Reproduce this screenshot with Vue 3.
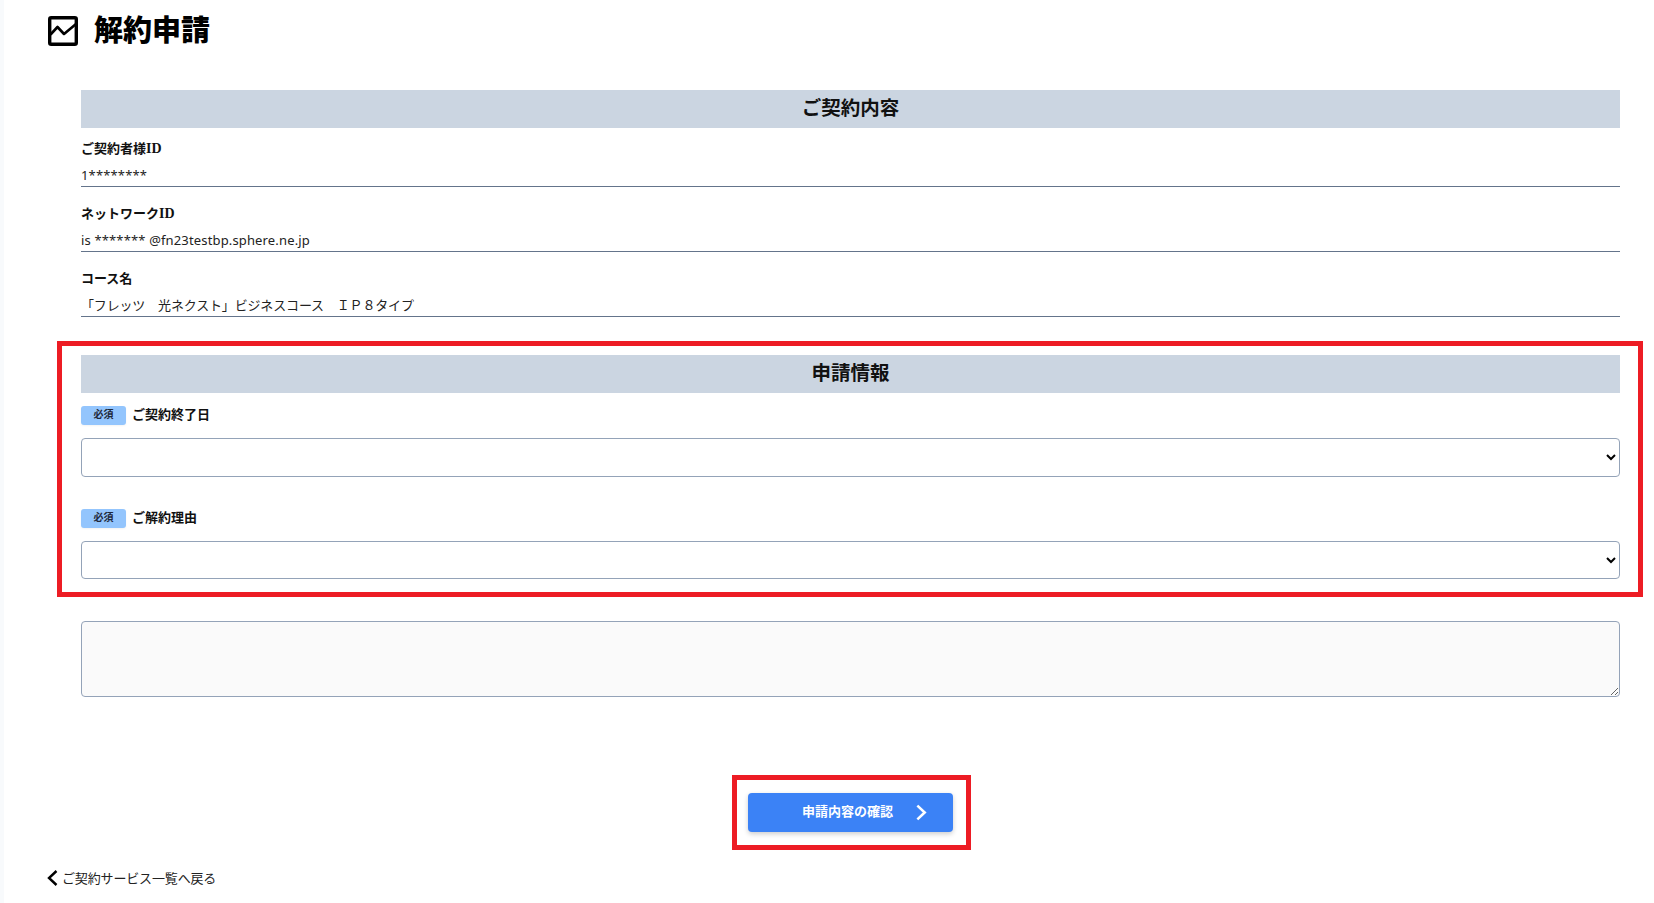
<script setup>
const contract = [
  { label: 'ご契約者様', latin: 'ID', value: '1********', cjk: false },
  { label: 'ネットワーク', latin: 'ID', value: 'is ******* @fn23testbp.sphere.ne.jp', cjk: false },
  { label: 'コース名', latin: '', value: '「フレッツ　光ネクスト」ビジネスコース　ＩＰ８タイプ', cjk: true }
]
</script>

<template>
  <div class="page">
    <div class="strip"></div>
    <main class="main">
      <header class="title-row">
        <svg class="title-icon" viewBox="0 0 30 30" fill="none" stroke="#000" stroke-width="3.4" stroke-linejoin="round" stroke-linecap="round">
          <rect x="1.7" y="1.7" width="26.6" height="26.6" rx="1.5" />
          <path stroke-width="2.6" d="M3 18 L9.5 11 L16 18 L28 8" />
        </svg>
        <h1 class="title">解約申請</h1>
      </header>

      <div class="content">
        <h2 class="section-head">ご契約内容</h2>
        <div v-for="item in contract" :key="item.label" class="field">
          <div class="field-label">{{ item.label }}<span class="latin">{{ item.latin }}</span></div>
          <div class="field-value" :class="{ 'field-value-cjk': item.cjk }">{{ item.value }}</div>
        </div>

        <section class="apply">
          <div class="annot annot-apply"></div>
          <h2 class="section-head">申請情報</h2>
          <div class="req-row">
            <span class="badge">必須</span><span class="req-label">ご契約終了日</span>
          </div>
          <select class="select select-first"></select>
          <div class="req-row req-row-second">
            <span class="badge">必須</span><span class="req-label">ご解約理由</span>
          </div>
          <select class="select"></select>
        </section>

        <textarea class="memo"></textarea>

        <div class="actions">
          <div class="submit-wrap">
            <div class="annot annot-submit"></div>
            <button class="submit" type="button">
              <span class="submit-text">申請内容の確認</span>
              <svg class="submit-chevron" viewBox="0 0 12 18" fill="none" stroke="#fff" stroke-width="2.8">
                <path d="M1.5 1.5 L9.5 9 L1.5 16.5" />
              </svg>
            </button>
          </div>
        </div>
      </div>

      <a class="back">
        <svg class="back-chevron" viewBox="0 0 11 16" fill="none" stroke="#000" stroke-width="2.4">
          <path d="M9.5 1 L2 8 L9.5 15" />
        </svg>
        <span class="back-text">ご契約サービス一覧へ戻る</span>
      </a>
    </main>
  </div>
</template>

<style>
html, body { margin: 0; background: #fff; }
</style>

<style scoped>
.page {
  display: flex;
  min-height: 903px;
  font-family: "Inter", "Noto Sans CJK JP", sans-serif;
  color: #111;
  overflow: hidden;
}
.strip { width: 4px; flex: none; background: #f8fafc; }
.main { flex: 1; min-width: 0; }
.title-row {
  display: flex;
  align-items: center;
  gap: 16px;
  height: 34px;
  margin: 14px 0 0 44px;
}
.title-icon { width: 30px; height: 30px; flex: none; }
.title {
  margin: 0;
  font-size: 29px;
  line-height: 34px;
  font-weight: 900;
  color: #000;
}
.content { width: 1539px; margin: 42px 0 0 77px; }
.section-head {
  margin: 0;
  height: 38px;
  line-height: 36px;
  background: #cbd5e1;
  text-align: center;
  font-size: 19.5px;
  font-weight: 700;
  color: #111;
}
.field { padding-top: 16px; border-bottom: 1px solid #64748b; }
.section-head + .field { padding-top: 10px; }
.field-label {
  height: 20px;
  line-height: 20px;
  font-size: 13px;
  font-weight: 700;
  color: #111;
}
.latin { font-family: "Liberation Serif", serif; font-size: 14px; }
.field-value {
  margin-top: 7px;
  height: 21px;
  line-height: 21px;
  font-family: "Noto Sans", "Noto Sans CJK JP", sans-serif;
  font-size: 13px;
  letter-spacing: 0.15px;
  color: #222;
}
.field-value-cjk { letter-spacing: -0.16px; }
.apply { position: relative; margin-top: 38px; }
.annot {
  position: absolute;
  border: 5px solid #ed1c24;
  pointer-events: none;
}
.annot-apply { left: -24px; right: -23px; top: -14px; bottom: -18px; }
.annot-submit { left: -16px; right: -18px; top: -18px; bottom: -18px; }
.req-row {
  display: flex;
  align-items: center;
  height: 19px;
  margin-top: 13px;
}
.req-row-second { margin-top: 32px; }
.badge {
  width: 45px;
  height: 19px;
  line-height: 17px;
  border-radius: 3px;
  background: #93c5fd;
  text-align: center;
  font-size: 10px;
  font-weight: 700;
  color: #1e293b;
  box-shadow: 0 1px 2px rgba(0, 0, 0, .05);
}
.req-label {
  margin-left: 6px;
  font-size: 13px;
  font-weight: 700;
  line-height: 17px;
  height: 19px;
  color: #111;
}
.select {
  display: block;
  box-sizing: border-box;
  width: 100%;
  height: 38px;
  margin-top: 13px;
  background: #fff;
  border: 1px solid #94a3b8;
  border-radius: 4px;
  font-size: 14px;
}
.select-first { height: 39px; }
.memo {
  display: block;
  box-sizing: border-box;
  width: 100%;
  height: 76px;
  margin-top: 42px;
  background: #fafafa;
  border: 1px solid #94a3b8;
  border-radius: 4px;
  outline: none;
}
.actions { display: flex; justify-content: center; margin-top: 96px; }
.submit-wrap { position: relative; }
.submit {
  display: block;
  position: relative;
  box-sizing: border-box;
  width: 205px;
  height: 39px;
  padding: 0 6px 4px 0;
  border: 0;
  border-radius: 4px;
  background: #3b82f6;
  box-shadow: 0 2px 5px rgba(0, 0, 0, .2);
  font-family: inherit;
  color: #fff;
}
.submit-text {
  display: block;
  text-align: center;
  font-size: 13px;
  font-weight: 700;
  line-height: 20px;
}
.submit-chevron {
  position: absolute;
  left: 168px;
  top: 11px;
  width: 11px;
  height: 17px;
}
.back {
  display: flex;
  align-items: center;
  gap: 4px;
  height: 20px;
  margin: 35px 0 0 43px;
  font-size: 13px;
  color: #222;
}
.back-text { letter-spacing: -0.15px; }
.back-chevron { width: 11px; height: 16px; flex: none; position: relative; top: 1px; }
</style>
